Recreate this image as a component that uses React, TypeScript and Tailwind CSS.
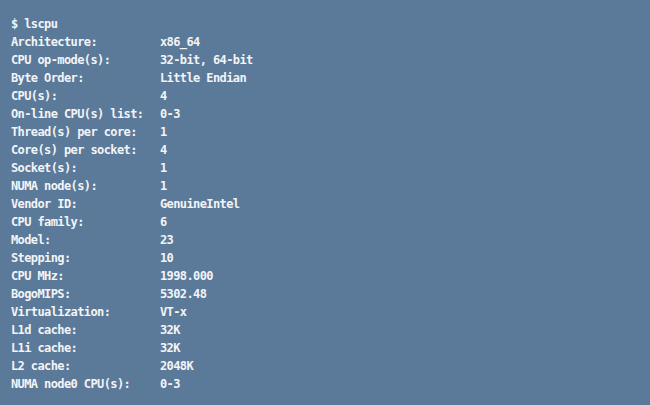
const rows: [string, string][] = [
  ["Architecture:", "x86_64"],
  ["CPU op-mode(s):", "32-bit, 64-bit"],
  ["Byte Order:", "Little Endian"],
  ["CPU(s):", "4"],
  ["On-line CPU(s) list:", "0-3"],
  ["Thread(s) per core:", "1"],
  ["Core(s) per socket:", "4"],
  ["Socket(s):", "1"],
  ["NUMA node(s):", "1"],
  ["Vendor ID:", "GenuineIntel"],
  ["CPU family:", "6"],
  ["Model:", "23"],
  ["Stepping:", "10"],
  ["CPU MHz:", "1998.000"],
  ["BogoMIPS:", "5302.48"],
  ["Virtualization:", "VT-x"],
  ["L1d cache:", "32K"],
  ["L1i cache:", "32K"],
  ["L2 cache:", "2048K"],
  ["NUMA node0 CPU(s):", "0-3"],
];

export default function App() {
  return (
    <div className="h-[405px] w-[650px] overflow-hidden bg-[#5b7a99] pl-[11px] pt-[15px] font-['DejaVu_Sans_Mono',monospace] text-[12px] font-bold leading-[18px] tracking-[-0.6px] text-[#f2f4f7]">
      <div className="whitespace-pre">$ lscpu</div>
      <div className="grid grid-cols-[149px_1fr]">
        {rows.map(([label, value]) => (
          <div key={label} className="contents">
            <span className="whitespace-pre">{label}</span>
            <span className="whitespace-pre">{value}</span>
          </div>
        ))}
      </div>
    </div>
  );
}
